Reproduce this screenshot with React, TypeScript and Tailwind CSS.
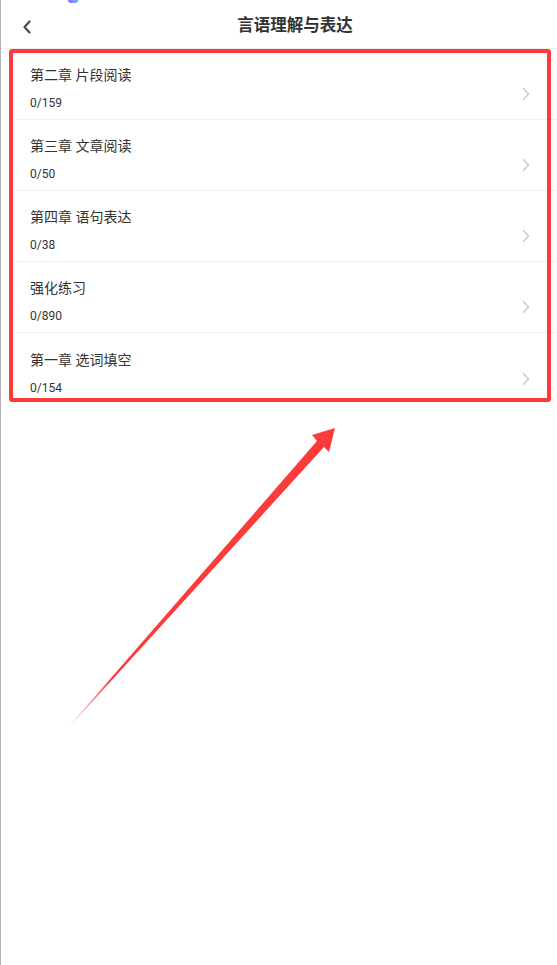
import React from "react";

const chapters = [
  { title: "第二章 片段阅读", done: 0, total: 159 },
  { title: "第三章 文章阅读", done: 0, total: 50 },
  { title: "第四章 语句表达", done: 0, total: 38 },
  { title: "强化练习", done: 0, total: 890 },
  { title: "第一章 选词填空", done: 0, total: 154 },
];

function ChevronRight() {
  return (
    <svg width="8" height="14" viewBox="0 0 8 14" fill="none">
      <path d="M1.5 1.5 L6.5 7 L1.5 12.5" stroke="#c9c9c9" strokeWidth="1.4" strokeLinecap="round" strokeLinejoin="round" />
    </svg>
  );
}

export default function App() {
  return (
    <div
      className="relative w-[557px] h-[965px] bg-white overflow-hidden border-l border-[#b4b4b4] text-[#333]"
      style={{ fontFamily: "Roboto, 'Noto Sans CJK SC', sans-serif" }}
    >
      {/* bit of the status bar icon cut off at the top */}
      <div className="absolute left-[67px] top-0 w-[10px] h-[3px] rounded-b-sm bg-gradient-to-r from-[#a24dff] to-[#22c7e0]" />

      <header className="h-[49px] flex items-center pl-[18px] pt-[5px] border-b border-[#ededed]">
        <button className="w-[16px] h-[18px] flex items-center justify-center">
          <svg width="10" height="14" viewBox="0 0 10 14" fill="none">
            <path d="M7.5 1.5 L2.5 7 L7.5 12.5" stroke="#4a4a4a" strokeWidth="2.2" strokeLinecap="round" strokeLinejoin="round" />
          </svg>
        </button>
        <h1 className="flex-1 text-center text-[16.5px] font-bold text-[#333] pr-[2px]">言语理解与表达</h1>
      </header>

      <ul>
        {chapters.map((c, i) => (
          <li
            key={c.title}
            className={`h-[71px] flex items-center ml-[15px] pl-[14px] pr-[27px] ${i < chapters.length - 1 ? "border-b border-[#f0f0f0]" : ""}`}
          >
            <div className="flex-1 pt-[8px]">
              <div className="text-[14px] leading-[20px]">{c.title}</div>
              <div className="text-[12px] leading-[16px] mt-[10px]">
                {c.done}/{c.total}
              </div>
            </div>
            <div className="pt-[20px]">
              <ChevronRight />
            </div>
          </li>
        ))}
      </ul>

      {/* highlight box */}
      <div className="absolute left-[8px] top-[49px] w-[542px] h-[353px] border-[4px] border-[#fd3b3b] rounded-[3px] pointer-events-none" />

      {/* arrow */}
      <svg className="absolute left-0 top-0 pointer-events-none" width="557" height="965" viewBox="0 0 557 965">
        <defs>
          <linearGradient id="tail" x1="70" y1="724" x2="110" y2="678" gradientUnits="userSpaceOnUse">
            <stop offset="0" stopColor="#fd3b3b" stopOpacity="0.15" />
            <stop offset="1" stopColor="#fd3b3b" />
          </linearGradient>
        </defs>
        <polygon points="70,724 316,441 311,435 334,428 328,452 323,447 71,724" fill="url(#tail)" />
      </svg>
    </div>
  );
}
